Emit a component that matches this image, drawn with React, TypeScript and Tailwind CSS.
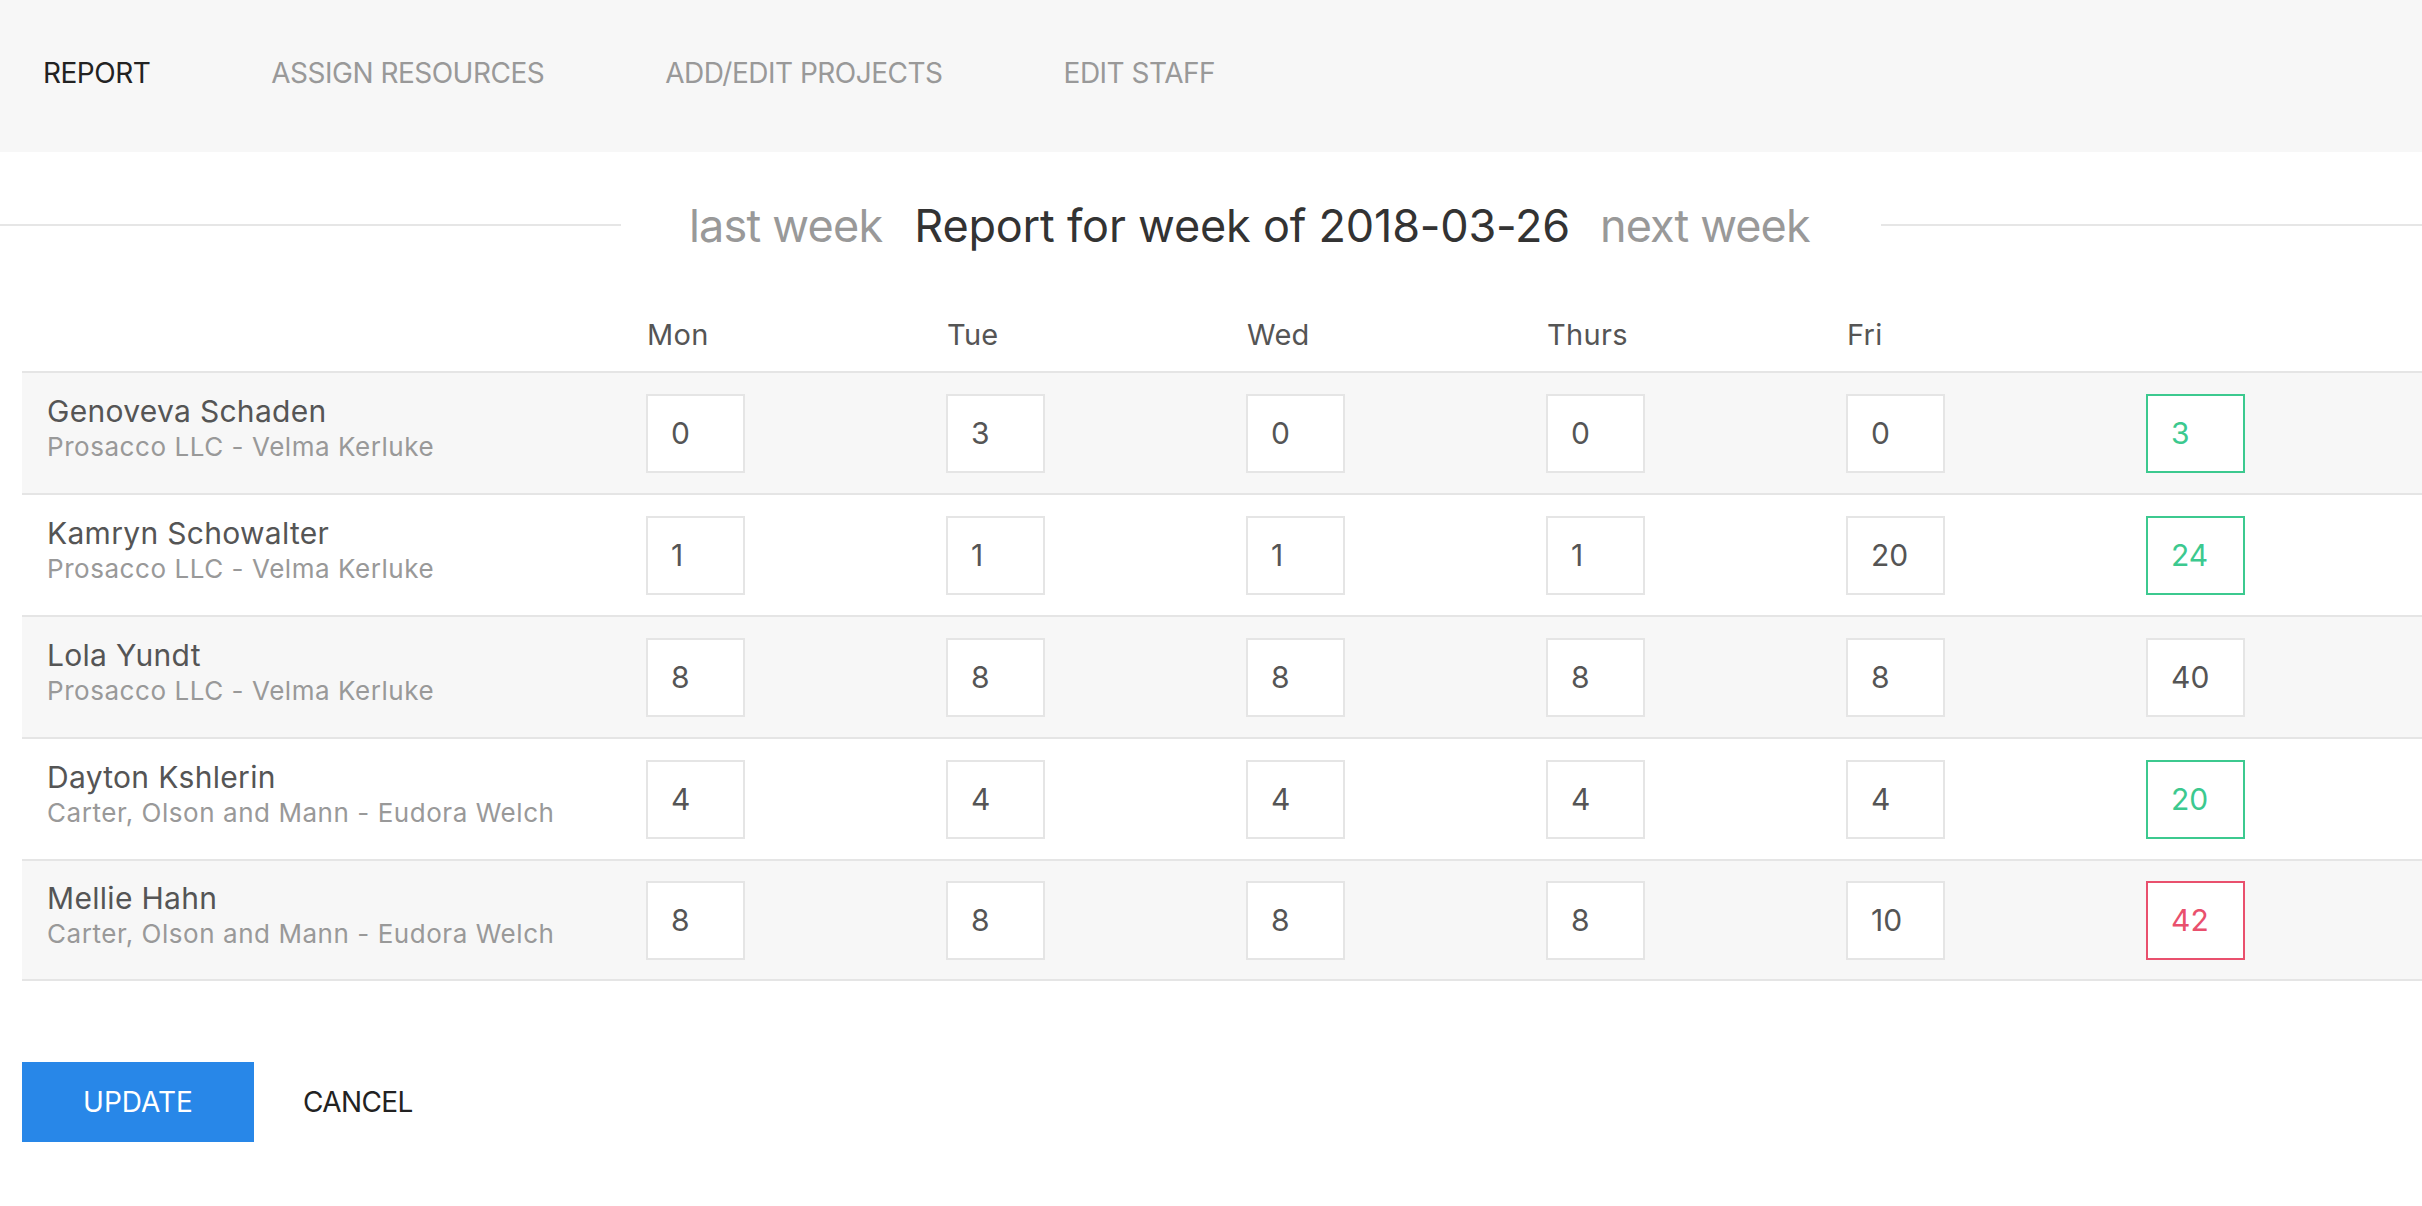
import React from "react";

// Navigation tabs
const tabs = ["REPORT", "ASSIGN RESOURCES", "ADD/EDIT PROJECTS", "EDIT STAFF"];

const days = ["Mon", "Tue", "Wed", "Thurs", "Fri"];

// Hours per staff member for the week
const rows = [
  { name: "Genoveva Schaden", project: "Prosacco LLC - Velma Kerluke", hours: [0, 3, 0, 0, 0] },
  { name: "Kamryn Schowalter", project: "Prosacco LLC - Velma Kerluke", hours: [1, 1, 1, 1, 20] },
  { name: "Lola Yundt", project: "Prosacco LLC - Velma Kerluke", hours: [8, 8, 8, 8, 8] },
  { name: "Dayton Kshlerin", project: "Carter, Olson and Mann - Eudora Welch", hours: [4, 4, 4, 4, 4] },
  { name: "Mellie Hahn", project: "Carter, Olson and Mann - Eudora Welch", hours: [8, 8, 8, 8, 10] },
];

const font = "[font-family:Inter,'Liberation_Sans',sans-serif]";

const totalStyle = (total: number): string => {
  if (total > 40) return "border-[#e9506d] text-[#e9506d]";
  if (total < 40) return "border-[#3cc98f] text-[#3cc98f]";
  return "border-[#e5e5e5] text-[#555]";
};

export default function App(): React.ReactElement {
  return (
    <div className={`${font} w-full min-h-screen bg-white`}>
      {/* Top navigation */}
      <nav className="h-[152px] bg-[#f7f7f7] flex items-center pl-[43px] pb-[6px] gap-[121px]">
        {tabs.map((tab, i) => (
          <a
            key={tab}
            href="#"
            className={`text-[28px] leading-none tracking-[-0.5px] ${i === 0 ? "text-[#222]" : "text-[#999]"}`}
          >
            {tab}
          </a>
        ))}
      </nav>

      {/* Week switcher */}
      <div className="h-[146px] flex items-center">
        <div className="w-[621px] h-[2px] bg-[#e6e6e6]" />
        <a href="#" className="ml-[68px] text-[45px] leading-none tracking-[-0.8px] text-[#999]">
          last week
        </a>
        <h1 className="ml-[32px] text-[45px] leading-none tracking-[-0.2px] text-[#333]">
          Report for week of 2018-03-26
        </h1>
        <a href="#" className="ml-[30px] text-[45px] leading-none tracking-[-0.9px] text-[#999]">
          next week
        </a>
        <div className="flex-1 ml-[71px] h-[2px] bg-[#e6e6e6]" />
      </div>

      {/* Hours table */}
      <div className="pl-[22px]">
        <div className="grid grid-cols-[624px_repeat(5,300px)_1fr] h-[73px] items-end pb-[22px]">
          <div />
          {days.map((d) => (
            <div key={d} className="text-[29px] leading-none tracking-[0.3px] text-[#555] pl-[1px]">
              {d}
            </div>
          ))}
          <div />
        </div>

        {rows.map((row, i) => {
          const total = row.hours.reduce((a, b) => a + b, 0);
          return (
            <div
              key={row.name}
              className={`grid grid-cols-[624px_repeat(5,300px)_1fr] h-[122px] items-center border-t-2 border-[#e5e5e5] ${
                i % 2 === 0 ? "bg-[#f7f7f7]" : "bg-white"
              } ${i === rows.length - 1 ? "border-b-2" : ""}`}
            >
              <div className="pl-[25px] pb-[8px] flex flex-col">
                <span className="text-[30px] leading-[36px] tracking-[0.3px] text-[#555]">{row.name}</span>
                <span className="text-[26px] leading-[36px] tracking-[0.55px] text-[#999]">{row.project}</span>
              </div>
              {row.hours.map((h, j) => (
                <div key={j}>
                  <div className="w-[99px] h-[79px] border-2 border-[#e5e5e5] bg-white flex items-center pl-[23px] text-[30px] text-[#555]">
                    {h}
                  </div>
                </div>
              ))}
              <div>
                <div
                  className={`w-[99px] h-[79px] border-2 bg-white flex items-center pl-[23px] text-[30px] ${totalStyle(total)}`}
                >
                  {total}
                </div>
              </div>
            </div>
          );
        })}

        {/* Actions */}
        <div className="flex items-center mt-[81px]">
          <button className="w-[232px] h-[80px] bg-[#2887e8] text-white text-[28px] leading-none">
            UPDATE
          </button>
          <button className="ml-[49px] text-[28px] leading-none tracking-[-0.6px] text-[#222]">CANCEL</button>
        </div>
      </div>
    </div>
  );
}
